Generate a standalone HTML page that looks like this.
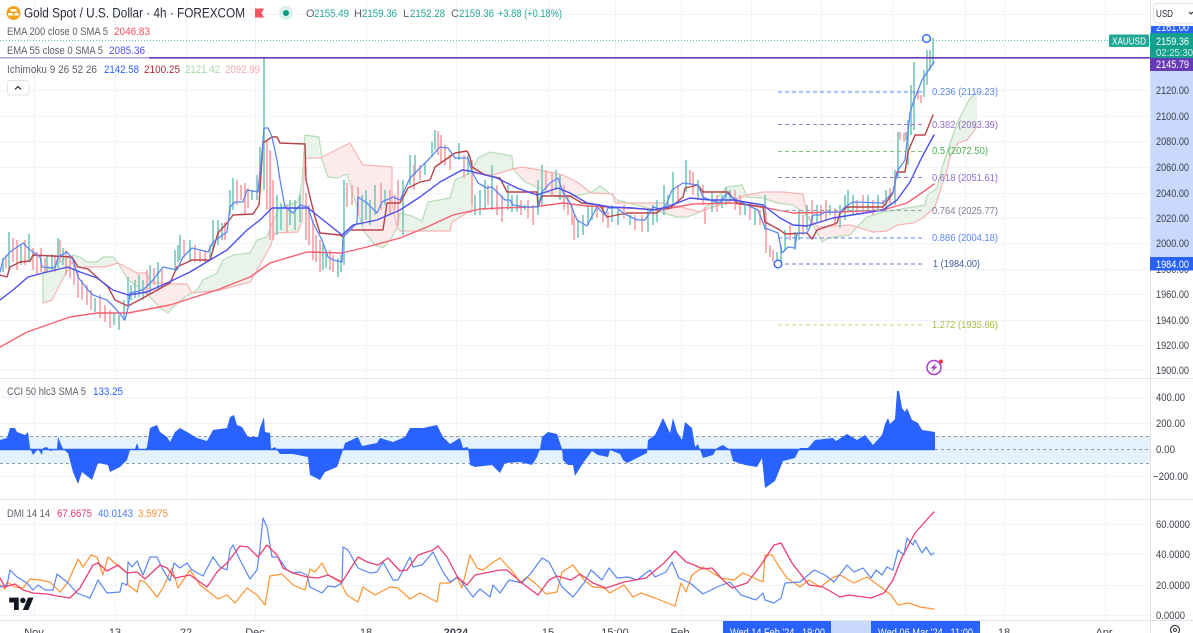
<!DOCTYPE html>
<html>
<head>
<meta charset="utf-8">
<style>
html,body{margin:0;padding:0;background:#fff;width:1193px;height:633px;overflow:hidden}
svg{display:block;font-family:"Liberation Sans",sans-serif}
svg.root{filter:blur(.3px)}
.ax{font-size:11px;fill:#3e424d}
.ta{font-size:11px;fill:#3e424d;text-anchor:middle}
.lg{font-size:11px;fill:#5d606b}
.fb{font-size:10.5px}
.ln{fill:none;stroke-linejoin:round;stroke-linecap:round}
</style>
</head>
<body>
<svg class="root" width="1193" height="633" viewBox="0 0 1193 633" xmlns="http://www.w3.org/2000/svg">
<!-- grid -->
<path fill="none" stroke="#f0f3fa" stroke-width="1" d="M34.500 0V620M115.500 0V620M186.500 0V620M255.500 0V620M366.500 0V620M456.500 0V620M548.500 0V620M615.500 0V620M681.500 0V620M751.500 0V620M821.500 0V620M892.500 0V620M965.500 0V620M1004.500 0V620M1105.500 0V620
M0 14.500H1150M0 90.500H1150M0 116.500H1150M0 141.500H1150M0 167.500H1150M0 193.500H1150M0 218.500H1150M0 243.500H1150M0 269.500H1150M0 294.500H1150M0 320.500H1150M0 345.500H1150M0 370.500H1150
M0 397.500H1150M0 423.500H1150M0 476.500H1150M0 524.500H1150M0 554.500H1150M0 585.500H1150M0 615.500H1150"/>

<!-- cloud -->
<g stroke-width="1.2" stroke-linejoin="round">
<path fill="#e9f3ea" stroke="none" d="M43 272L60 262 73 255 80 257 87 262 97 262 103 257 113 257 118 263 105 267 75 267 72 262 65 275 58 288 52 300 43 303Z"/>
<path fill="#fdeaea" stroke="none" d="M118 263L128 268 137 273 147 273 150 282 173 284 187 284 192 293 185 297 173 307 168 313 160 308 150 297 138 287 128 280Z"/>
<path fill="#e9f3ea" stroke="none" d="M192 293L197 290 203 280 217 273 223 260 233 255 250 253 257 240 267 237 272 223 280 207 298 202 302 183 305 135 312 136 319 137 320 158 305 158 302 220 298 232 275 233 270 247 257 270 250 282 220 290Z"/>
<path fill="#fdeaea" stroke="none" d="M320 158L342 147 350 143 363 165 392 167 392 203 397 227 397 228 390 240 383 248 375 245 363 230 355 200 347 174 337 178 328 177 322 160Z"/>
<path fill="#e9f3ea" stroke="none" d="M397 228L400 213 412 216 422 221 428 202 450 198 455 180 472 172 478 158 490 152 512 156 513 169 493 175 472 173 472 212 467 213 452 222 450 231 400 231Z"/>
<path fill="#fdeaea" stroke="none" d="M513 169L522 167 540 170 563 175 577 182 590 192 560 198 543 190 525 182Z"/>
<path fill="#e9f3ea" stroke="none" d="M590 193L600 186 612 195 617 200 613 194Z"/>
<path fill="#fdeaea" stroke="none" d="M617 200L615 203 650 203 663 203 693 210 700 212 687 217 677 217 660 212 640 206Z"/>
<path fill="#e9f3ea" stroke="none" d="M700 212L715 200 727 187 742 185 747 197 725 203 710 208Z"/>
<path fill="#fdeaea" stroke="none" d="M747 195L763 192 783 192 803 194 807 215 818 227 850 225 857 227 850 235 828 238 822 242 812 223 803 212 793 205 777 203 763 198 747 197Z"/>
<path fill="#e9f3ea" stroke="none" d="M857 227L867 217 883 212 925 205 927 195 937 188 942 168 947 153 957 123 970 98 977 92 977 127 967 140 958 143 950 157 947 170 938 197 935 207 923 218 913 223 897 225 887 231 873 232Z"/>
<!-- span A (green) -->
<path class="ln" stroke="#b5dcb7" d="M43 303L43 272 60 262 73 255 80 257 87 262 97 262 103 257 113 257 118 263 128 280 138 287 150 297 160 308 168 313 173 307 185 297 192 293 197 290 203 280 217 273 223 260 233 255 250 253 257 240 267 237 272 223 280 207 298 202 302 183 305 135 312 136 319 137 322 160 328 177 337 178 347 174 355 200 363 230 375 245 383 248 390 240 397 228 400 213 412 216 422 221 428 202 450 198 455 180 472 172 478 158 490 152 512 156 513 169 525 182 543 190 560 198 590 193 600 186 612 195 617 200 640 206 660 212 677 217 687 217 700 212 715 200 727 187 742 185 747 197 763 198 777 203 793 205 803 212 812 223 822 242 828 238 850 235 857 227 867 217 883 212 925 205 927 195 937 188 942 168 947 153 957 123 970 98 977 92"/>
<!-- span B (red) -->
<path class="ln" stroke="#f8b4b4" d="M43 303L52 300 58 288 65 275 72 262 75 267 105 267 118 263 128 268 137 273 147 273 150 282 173 284 187 284 192 293 220 290 250 282 257 270 270 247 275 233 298 232 302 220 305 158 320 158 342 147 350 143 363 165 392 167 392 203 397 227 400 231 450 231 452 222 467 213 472 212 472 173 493 175 513 169 522 167 540 170 563 175 577 182 590 192 592 193 613 194 615 203 650 203 663 203 693 210 700 212 710 208 725 203 747 195 763 192 783 192 803 194 807 215 818 227 850 225 857 227 873 232 887 231 897 225 913 223 923 218 935 207 938 197 947 170 950 157 958 143 967 140 977 127"/>
</g>

<!-- candles -->
<path fill="none" stroke="#f7a4a8" stroke-width="1.7" d="M6 255V268M13 238V262M17 240V270M25 240V265M33 248V270M37 252V275M41 248V272M45 258V272M55 255V272M60 240V262M66 250V275M70 255V278M74 260V285M78 272V298M82 280V300M87 285V305M91 290V310M100 295V318M105 305V322M110 310V328M147 270V295M154 268V285M162 270V288M184 240V258M195 245V262M200 250V262M205 250V262M225 222V240M237 180V205M241 185V200M245 183V215M248 188V208M267 140V210M270 150V240M273 180V240M287 205V232M306 193V240M309 205V245M313 220V260M316 235V262M320 240V272M330 250V270M333 255V272M347 183V207M352 185V205M358 187V215M381 183V210M390 190V215M395 195V210M398 180V225M414 165V190M420 165V180M438 131V155M441 135V162M445 145V165M450 155V170M464 155V178M472 160V205M488 185V205M497 185V215M502 195V222M521 200V215M528 200V218M533 205V225M546 170V190M552 172V195M564 185V210M568 195V215M572 205V225M574 215V240M597 205V218M603 205V222M608 212V228M624 205V218M635 215V230M642 215V232M678 185V200M690 170V185M693 172V195M703 185V205M705 207V224M717 195V212M735 190V210M740 195V215M750 202V220M760 210V225M766 212V253M770 245V257M773 250V262M790 225V240M803 215V235M812 200V225M821 205V222M826 200V220M835 208V225M857 200V215M863 195V210M873 200V215M883 200V212M890 188V205M900 132V140M904 133V142M918 90V100M921 95V103"/>
<path fill="none" stroke="#7dcabf" stroke-width="1.7" d="M3 258V272M9 232V270M21 245V265M29 234V262M47 255V272M52 254V270M58 238V268M63 248V265M95 298V312M114 313V325M119 315V330M124 300V320M128 277V305M131 285V300M135 280V298M139 275V297M143 280V300M150 265V295M158 262V290M175 250V270M180 235V260M190 240V262M178 245V262M210 245V258M213 220V250M218 220V245M222 223V240M230 190V215M233 178V210M252 190V200M257 175V200M260 147V192M277 195V235M281 203V230M290 200V225M295 200V230M300 195V222M323 245V270M326 250V268M338 258V277M341 255V272M344 180V265M362 195V225M366 190V220M370 200V225M375 185V215M385 190V205M403 180V235M410 155V185M415 155V175M425 163V175M432 142V157M435 130V150M459 143V160M468 155V175M475 195V215M480 190V215M485 180V210M492 165V210M508 185V210M512 195V212M517 195V212M525 205V210M538 180V215M542 165V205M556 170V190M560 175V200M578 220V238M583 215V235M588 205V225M592 205V220M612 205V222M618 210V225M630 215V225M648 210V232M653 205V225M657 200V222M664 185V215M668 195V210M673 172V205M686 160V192M698 180V200M712 192V212M722 195V208M726 187V205M730 190V200M745 205V215M755 208V225M765 195V230M777 252V265M781 245V262M785 230V250M795 232V250M799 210V240M807 205V230M817 205V222M830 205V215M840 205V228M845 195V220M848 190V212M853 195V215M868 195V212M878 195V210M886 190V210M895 170V205M898 132V178M906 132V140M908 120V165M911 85V135M914 62V130M924 70V97M927 50V85M930 50V70M933 38V65"/>
<path fill="none" stroke="#8ed3c9" stroke-width="2" d="M264 58V190"/>

<!-- EMA 200 -->
<path class="ln" stroke="#f8606d" stroke-width="1.4" d="M0 347L27 332 70 317 97 313 128 313 170 305 217 290 250 277 270 263 307 252 342 253 367 247 400 238 427 227 453 215 480 209 500 208 533 207 563 203 587 206 627 208 660 210 693 204 733 203 767 208 793 213 840 212 883 210 907 203 923 192 934 184"/>
<!-- Kijun -->
<path class="ln" stroke="#b84347" stroke-width="1.4" d="M0 275L7 277 10 267 20 262 30 261 33 255 72 257 78 267 88 269 100 280 108 287 115 300 128 306 143 298 170 283 177 267 192 260 210 260 213 250 218 233 227 223 233 215 253 214 259 205 263 143 272 137 277 137 280 143 305 144 306 180 310 197 315 217 320 233 340 235 343 237 350 230 383 230 387 203 400 203 408 188 420 182 430 180 435 167 455 153 467 151 470 157 472 167 485 175 500 178 507 192 537 192 538 207 542 196 570 196 582 203 600 205 607 217 627 213 657 213 662 208 670 208 683 197 685 188 698 185 703 192 728 192 737 203 763 207 765 222 780 230 785 234 807 233 812 239 817 230 837 223 840 213 847 207 883 207 893 193 897 172 905 172 908 152 915 135 925 135 933 115"/>
<!-- Tenkan -->
<path class="ln" stroke="#5a86f6" stroke-width="1.3" d="M0 272L3 260 10 252 23 243 30 250 40 257 42 267 55 268 58 257 67 252 73 260 78 277 88 290 93 295 107 300 115 308 125 320 128 308 130 293 143 290 153 280 163 267 177 270 183 257 192 248 208 252 213 242 227 232 230 207 235 202 243 202 247 190 258 192 262 153 264 128 268 128 272 137 277 160 280 180 285 207 293 213 300 205 308 207 313 223 322 240 328 257 333 260 342 262 343 237 357 223 358 197 367 203 377 213 382 202 393 197 400 200 410 178 418 170 430 158 440 147 448 148 455 158 468 158 472 172 478 183 487 188 492 187 505 200 510 200 513 205 525 207 538 207 542 192 550 183 558 178 563 192 570 203 577 220 587 226 597 207 605 215 608 208 617 208 623 213 637 220 645 220 653 207 663 210 667 203 672 190 683 183 698 185 703 197 710 200 720 203 727 193 733 198 747 205 758 210 765 228 778 233 782 253 788 247 795 248 797 233 807 233 810 227 813 215 820 215 825 212 840 212 845 207 853 202 883 203 893 192 898 170 905 160 910 113 913 103 922 80 934 62"/>
<!-- EMA 55 -->
<path class="ln" stroke="#4a4df0" stroke-width="1.4" d="M0 300L13 290 28 277 43 273 68 267 80 272 97 278 113 290 128 295 147 292 167 283 190 272 210 260 227 250 247 230 260 220 272 208 300 208 308 208 342 235 353 225 377 220 400 210 420 197 440 182 462 170 470 171 497 178 517 188 537 195 558 188 570 193 587 203 610 207 633 208 653 210 667 207 690 198 710 200 733 200 763 205 780 218 793 225 807 226 833 218 883 210 897 200 910 182 922 157 934 135"/>

<!-- price lines -->
<path stroke="#5fb9ac" stroke-width="1" stroke-dasharray="1 2" d="M0 40.500H1109"/>
<path stroke="#673ab7" stroke-width="1.600" d="M0 57.800H1150"/>
<path stroke="#fff" stroke-opacity=".55" stroke-width="3" d="M0 57.800H149"/>

<!-- fib -->
<g stroke-width="1" stroke-dasharray="4 3" fill="none">
<path stroke="#5a86f6" d="M778 92H925"/>
<path stroke="#9a78d6" d="M778 124.500H925"/>
<path stroke="#7cc27f" d="M778 151.500H925"/>
<path stroke="#9a78d6" d="M778 177.500H925"/>
<path stroke="#9aa0b8" d="M778 210.500H925"/>
<path stroke="#5a86f6" d="M778 238H925"/>
<path stroke="#5b7fc4" d="M778 264H925"/>
<path stroke="#c6d97a" d="M778 325H925"/>
</g>
<g class="fb">
<text x="932" y="95" fill="#5a86f6" textLength="66" lengthAdjust="spacingAndGlyphs">0.236 (2119.23)</text>
<text x="932" y="128" fill="#8b6cc6" textLength="66" lengthAdjust="spacingAndGlyphs">0.382 (2093.39)</text>
<text x="932" y="154" fill="#4caf50" textLength="56" lengthAdjust="spacingAndGlyphs">0.5 (2072.50)</text>
<text x="932" y="181" fill="#8b6cc6" textLength="66" lengthAdjust="spacingAndGlyphs">0.618 (2051.61)</text>
<text x="932" y="214" fill="#7a7f96" textLength="66" lengthAdjust="spacingAndGlyphs">0.764 (2025.77)</text>
<text x="932" y="241" fill="#5a86f6" textLength="66" lengthAdjust="spacingAndGlyphs">0.886 (2004.18)</text>
<text x="933" y="267" fill="#3c5a9e" textLength="47" lengthAdjust="spacingAndGlyphs">1 (1984.00)</text>
<text x="932" y="328" fill="#a6bd3c" textLength="66" lengthAdjust="spacingAndGlyphs">1.272 (1935.86)</text>
</g>
<circle cx="926.500" cy="38.500" r="3.800" fill="#fff" stroke="#2962ff" stroke-width="1.400"/>
<circle cx="778" cy="264" r="3.800" fill="#fff" stroke="#2962ff" stroke-width="1.400"/>

<!-- lightning -->
<circle cx="934" cy="367.500" r="7" fill="#fff" stroke="#a93fc6" stroke-width="1.500"/>
<path fill="#a93fc6" d="M936 363L930.500 368.500H933.500L932 372 937.500 366.500H934.500Z"/>
<circle cx="941" cy="361.500" r="2" fill="#f23645"/>

<!-- pane separators -->
<path stroke="#e0e3eb" stroke-width="1" d="M0 378.500H1193M0 499.500H1193M0 620.500H1193"/>

<!-- CCI -->
<rect x="0" y="436" width="1150" height="27" fill="#e3f2fd"/>
<path stroke="#9598a1" stroke-width="1" stroke-dasharray="3 3" d="M0 436.500H1150M0 463.500H1150M935 449.500H1150"/>
<path fill="#2962ff" d="M0 449.500L0 440 7 438 10 428 15 428 17 432 25 435 28 432 30 448 33 455 38 449 42 455 43 448 47 447 50 451 57 449 58 437 63 449 68 453 73 472 78 484 82 472 92 480 98 463 108 465 110 472 120 467 127 460 130 450 135 449 137 443 139 449 145 450 147 447 150 428 157 425 160 432 167 437 170 442 175 432 180 428 187 432 197 438 207 441 213 430 227 428 230 417 234 415 237 425 242 427 248 437 258 437 260 428 264 417 265 432 270 433 271 449 275 447 277 450 280 454 293 454 308 457 310 475 320 480 325 472 337 467 343 450 345 443 358 437 362 446 377 443 380 438 393 442 405 437 410 428 423 428 437 425 443 437 450 444 460 438 463 448 468 447 470 465 475 467 492 465 498 471 500 473 505 463 520 462 532 465 537 457 540 449 542 437 548 432 557 434 562 449 563 460 568 465 573 465 575 476 583 463 592 451 598 455 608 457 610 450 620 454 623 460 627 463 647 453 648 440 655 435 663 418 670 433 673 418 677 432 682 440 685 422 692 428 695 447 698 444 703 458 713 455 717 448 723 445 730 450 733 461 745 465 757 467 762 458 765 488 775 481 783 461 795 458 800 448 808 448 815 440 833 438 836 441 847 434 857 440 865 435 873 445 882 435 885 424 888 418 890 424 895 419 897 391 899 391 902 408 905 412 907 408 912 420 918 423 922 430 935 432 935 449.500Z"/>
<path stroke="#2962ff" stroke-width="1.500" d="M0 449.500H935"/>

<!-- DMI -->
<path class="ln" stroke="#ff9331" stroke-width="1.200" d="M0 585L5 589 7 582 15 587 23 588 30 579 40 580 50 582 60 592 68 582 78 559 83 567 91 555 97 557 103 575 108 557 117 565 127 573 128 585 137 592 140 580 145 582 157 597 163 588 172 568 178 588 190 570 200 585 213 595 218 599 227 595 235 603 247 588 257 595 265 605 270 576 282 574 293 585 305 590 310 569 315 572 322 563 328 575 340 582 347 595 358 602 363 587 375 595 390 587 398 588 410 599 420 593 437 602 440 583 450 583 457 577 462 588 470 555 477 568 483 570 492 563 500 558 513 572 520 583 527 577 535 583 546 594 557 592 562 572 573 565 584 580 593 587 604 588 610 593 624 585 633 597 641 593 655 598 675 606 681 583 686 592 692 575 703 567 721 578 734 580 743 573 763 582 765 555 772 555 778 565 787 578 800 587 809 580 820 587 834 577 840 575 854 583 867 577 882 588 891 595 898 605 909 603 920 607 934 609"/>
<path class="ln" stroke="#5a86f6" stroke-width="1.200" d="M0 587L7 585 10 570 17 577 27 583 33 590 38 585 45 590 53 590 57 574 67 582 77 593 90 598 98 580 107 593 120 592 122 583 127 585 128 562 132 567 137 561 143 575 150 557 157 557 163 570 170 581 174 563 180 568 187 563 192 570 203 576 213 557 220 567 227 570 230 550 233 545 240 560 250 579 257 570 260 548 263 518 267 527 272 557 278 557 287 570 293 573 300 572 307 575 310 587 322 593 328 586 335 587 342 583 343 547 348 550 358 568 370 573 377 572 383 562 393 580 398 580 410 557 413 567 422 565 433 552 443 572 450 582 458 577 473 597 480 589 490 597 493 585 500 593 509 580 522 583 531 573 542 558 549 562 562 587 573 597 584 583 591 570 602 580 609 568 617 578 628 577 637 580 650 570 655 577 666 572 672 562 679 578 690 583 703 594 717 587 730 582 741 595 756 600 763 593 765 600 774 603 781 598 785 583 800 582 814 570 825 575 834 582 847 565 854 572 863 568 871 578 876 570 882 575 887 567 893 570 898 550 904 555 907 538 913 545 915 540 922 553 926 547 931 555 934 553"/>
<path class="ln" stroke="#ee3f70" stroke-width="1.300" d="M0 578L5 587 15 584 23 590 33 593 47 594 57 596 70 598 80 588 93 565 98 563 107 571 118 565 127 573 137 572 145 579 160 565 167 568 175 578 190 575 207 587 217 572 227 563 240 546 248 547 258 557 267 545 277 555 283 568 293 573 307 577 318 578 328 575 342 582 358 557 367 562 378 565 388 558 400 571 407 570 418 555 433 550 438 546 447 557 458 578 467 585 475 575 490 572 500 570 507 570 522 583 538 595 549 580 557 576 571 580 580 574 593 583 606 588 624 582 646 578 664 563 675 551 686 562 694 565 703 569 712 568 723 580 732 588 747 583 761 565 774 545 781 543 792 563 809 585 823 587 840 597 849 595 871 598 884 593 893 580 902 557 915 533 931 515 934 512"/>

<!-- logo -->
<svg x="9" y="597" width="25" height="13" viewBox="0 3 36 19">
<path fill="#131722" d="M14 22H7V11H0V4h14v18zM28 22h-8l7.500-18h8L28 22z"/><circle cx="20" cy="8" r="4" fill="#131722"/>
</svg>

<!-- Legend -->
<circle cx="13.500" cy="13" r="7" fill="#f2a31b"/>
<path fill="#fff" d="M11 9h5l1 2.500h-7zM8.500 13h4l.5 2.500H8zM14.500 13h4l.5 2.500h-5z"/>
<text x="24" y="17.500" font-size="13.500" fill="#2a2e39" textLength="221" lengthAdjust="spacingAndGlyphs">Gold Spot / U.S. Dollar · 4h · FOREXCOM</text>
<path fill="#f7525f" d="M255 8.500H264L261.500 13 264 17.500H255Z"/>
<circle cx="286" cy="13" r="7" fill="#d9f0ec"/><circle cx="286" cy="13" r="3" fill="#089981"/>
<g font-size="11">
<text x="306" y="17" fill="#5d606b">O</text><text x="314" y="17" fill="#26a69a" textLength="35" lengthAdjust="spacingAndGlyphs">2155.49</text>
<text x="354" y="17" fill="#5d606b">H</text><text x="362" y="17" fill="#26a69a" textLength="35" lengthAdjust="spacingAndGlyphs">2159.36</text>
<text x="403" y="17" fill="#5d606b">L</text><text x="410" y="17" fill="#26a69a" textLength="35" lengthAdjust="spacingAndGlyphs">2152.28</text>
<text x="451" y="17" fill="#5d606b">C</text><text x="459" y="17" fill="#26a69a" textLength="35" lengthAdjust="spacingAndGlyphs">2159.36</text>
<text x="498" y="17" fill="#26a69a" textLength="64" lengthAdjust="spacingAndGlyphs">+3.88 (+0.18%)</text>
</g>
<text class="lg" x="7" y="35" textLength="101" lengthAdjust="spacingAndGlyphs">EMA 200 close 0 SMA 5</text>
<text x="114" y="35" font-size="11" fill="#f7525f" textLength="36" lengthAdjust="spacingAndGlyphs">2046.83</text>
<text class="lg" x="7" y="54" textLength="96" lengthAdjust="spacingAndGlyphs">EMA 55 close 0 SMA 5</text>
<text x="109" y="54" font-size="11" fill="#5252f5" textLength="36" lengthAdjust="spacingAndGlyphs">2085.36</text>
<text class="lg" x="7" y="73" textLength="90" lengthAdjust="spacingAndGlyphs">Ichimoku 9 26 52 26</text>
<text x="104" y="73" font-size="11" fill="#2962ff" textLength="35" lengthAdjust="spacingAndGlyphs">2142.58</text>
<text x="144" y="73" font-size="11" fill="#b22833" textLength="36" lengthAdjust="spacingAndGlyphs">2100.25</text>
<text x="185" y="73" font-size="11" fill="#a5d6a7" textLength="35" lengthAdjust="spacingAndGlyphs">2121.42</text>
<text x="225" y="73" font-size="11" fill="#f7a9a9" textLength="35" lengthAdjust="spacingAndGlyphs">2092.99</text>
<rect x="7.500" y="80.500" width="21.500" height="14.500" rx="2.500" fill="#fff" stroke="#e0e3eb"/>
<path fill="none" stroke="#131722" stroke-width="1.100" d="M15 89.500L18 86.500 21 89.500"/>
<text class="lg" x="7" y="395" textLength="79" lengthAdjust="spacingAndGlyphs">CCI 50 hlc3 SMA 5</text>
<text x="93" y="395" font-size="11" fill="#2962ff" textLength="30" lengthAdjust="spacingAndGlyphs">133.25</text>
<text class="lg" x="7" y="517" textLength="43" lengthAdjust="spacingAndGlyphs">DMI 14 14</text>
<text x="57" y="517" font-size="11" fill="#f23a6e" textLength="35" lengthAdjust="spacingAndGlyphs">67.6675</text>
<text x="98" y="517" font-size="11" fill="#4a7bf7" textLength="35" lengthAdjust="spacingAndGlyphs">40.0143</text>
<text x="138" y="517" font-size="11" fill="#ff9331" textLength="30" lengthAdjust="spacingAndGlyphs">3.5975</text>

<!-- price axis -->
<rect x="1150" y="0" width="43" height="633" fill="#fff"/>
<path stroke="#e0e3eb" d="M1150.500 0V633"/>
<rect x="1151" y="33" width="42" height="224" fill="#c9d8fd"/>
<rect x="1151" y="26" width="42" height="7" fill="#2962ff"/>
<text x="1156" y="31" font-size="11" fill="#fff" textLength="33" lengthAdjust="spacingAndGlyphs">2161.00</text>
<rect x="1151" y="0" width="42" height="26" fill="#fff"/>
<rect x="1153.500" y="3.500" width="45" height="19.500" rx="3" fill="#fff" stroke="#e0e3eb"/>
<text x="1156" y="17" font-size="10.500" fill="#2a2e39" textLength="17" lengthAdjust="spacingAndGlyphs">USD</text>
<path fill="none" stroke="#2a2e39" d="M1189 12L1191 14 1193 12"/>
<rect x="1109" y="34.500" width="40" height="12.500" rx="1.500" fill="#1ea896"/>
<text x="1112" y="44.500" font-size="10.500" fill="#fff" textLength="34" lengthAdjust="spacingAndGlyphs">XAUUSD</text>
<rect x="1150" y="33" width="43" height="25" fill="#13a08d"/>
<text x="1156" y="45" font-size="11" fill="#fff" textLength="33" lengthAdjust="spacingAndGlyphs">2159.36</text>
<text x="1156" y="56" font-size="10.500" fill="#d7f0ec" textLength="37" lengthAdjust="spacingAndGlyphs">02:25:30</text>
<rect x="1150" y="58" width="43" height="13" fill="#673ab7"/>
<text x="1156" y="68" font-size="11" fill="#fff" textLength="33" lengthAdjust="spacingAndGlyphs">2145.79</text>
<g class="ax">
<text x="1156" y="94" textLength="33" lengthAdjust="spacingAndGlyphs">2120.00</text>
<text x="1156" y="120" textLength="33" lengthAdjust="spacingAndGlyphs">2100.00</text>
<text x="1156" y="145" textLength="33" lengthAdjust="spacingAndGlyphs">2080.00</text>
<text x="1156" y="171" textLength="33" lengthAdjust="spacingAndGlyphs">2060.00</text>
<text x="1156" y="197" textLength="33" lengthAdjust="spacingAndGlyphs">2040.00</text>
<text x="1156" y="222" textLength="33" lengthAdjust="spacingAndGlyphs">2020.00</text>
<text x="1156" y="247" textLength="33" lengthAdjust="spacingAndGlyphs">2000.00</text>
<text x="1156" y="273" textLength="33" lengthAdjust="spacingAndGlyphs">1980.00</text>
<text x="1156" y="298" textLength="33" lengthAdjust="spacingAndGlyphs">1960.00</text>
<text x="1156" y="324" textLength="33" lengthAdjust="spacingAndGlyphs">1940.00</text>
<text x="1156" y="349" textLength="33" lengthAdjust="spacingAndGlyphs">1920.00</text>
<text x="1156" y="374" textLength="33" lengthAdjust="spacingAndGlyphs">1900.00</text>
<text x="1156" y="401" textLength="29" lengthAdjust="spacingAndGlyphs">400.00</text>
<text x="1156" y="427" textLength="29" lengthAdjust="spacingAndGlyphs">200.00</text>
<text x="1156" y="453" textLength="19" lengthAdjust="spacingAndGlyphs">0.00</text>
<text x="1153" y="480" textLength="35" lengthAdjust="spacingAndGlyphs">−200.00</text>
<text x="1156" y="528" textLength="34" lengthAdjust="spacingAndGlyphs">60.0000</text>
<text x="1156" y="558" textLength="34" lengthAdjust="spacingAndGlyphs">40.0000</text>
<text x="1156" y="589" textLength="34" lengthAdjust="spacingAndGlyphs">20.0000</text>
<text x="1156" y="619" textLength="29" lengthAdjust="spacingAndGlyphs">0.0000</text>
</g>
<rect x="1150" y="257" width="43" height="13.500" fill="#2962ff"/>
<text x="1156" y="268" font-size="11" fill="#fff" textLength="33" lengthAdjust="spacingAndGlyphs">1984.00</text>
<path stroke="#e0e3eb" d="M1150 378.500H1193M1150 499.500H1193M1150 620.500H1193"/>

<!-- time axis -->
<g class="ta">
<text x="34" y="636">Nov</text><text x="115" y="636">13</text><text x="186" y="636">22</text><text x="255" y="636">Dec</text><text x="366" y="636">18</text><text x="456" y="636" font-weight="bold">2024</text><text x="548" y="636">15</text><text x="615" y="636">15:00</text><text x="680" y="636">Feb</text><text x="1004" y="636">18</text><text x="1104" y="636">Apr</text>
</g>
<rect x="831" y="621" width="40" height="12" fill="#c9d8fd"/>
<rect x="723" y="621" width="108" height="12" fill="#2962ff"/>
<rect x="871" y="621" width="109" height="12" fill="#2962ff"/>
<text x="730" y="636" font-size="11" fill="#fff" textLength="95" lengthAdjust="spacingAndGlyphs">Wed 14 Feb '24&#160;&#160;&#160;19:00</text>
<text x="878" y="636" font-size="11" fill="#fff" textLength="95" lengthAdjust="spacingAndGlyphs">Wed 06 Mar '24&#160;&#160;&#160;11:00</text>
<circle cx="1175" cy="630" r="4.500" fill="none" stroke="#3e424d" stroke-width="1.200"/>
<circle cx="1175" cy="630" r="1.500" fill="none" stroke="#3e424d"/>
</svg>
</body>
</html>
